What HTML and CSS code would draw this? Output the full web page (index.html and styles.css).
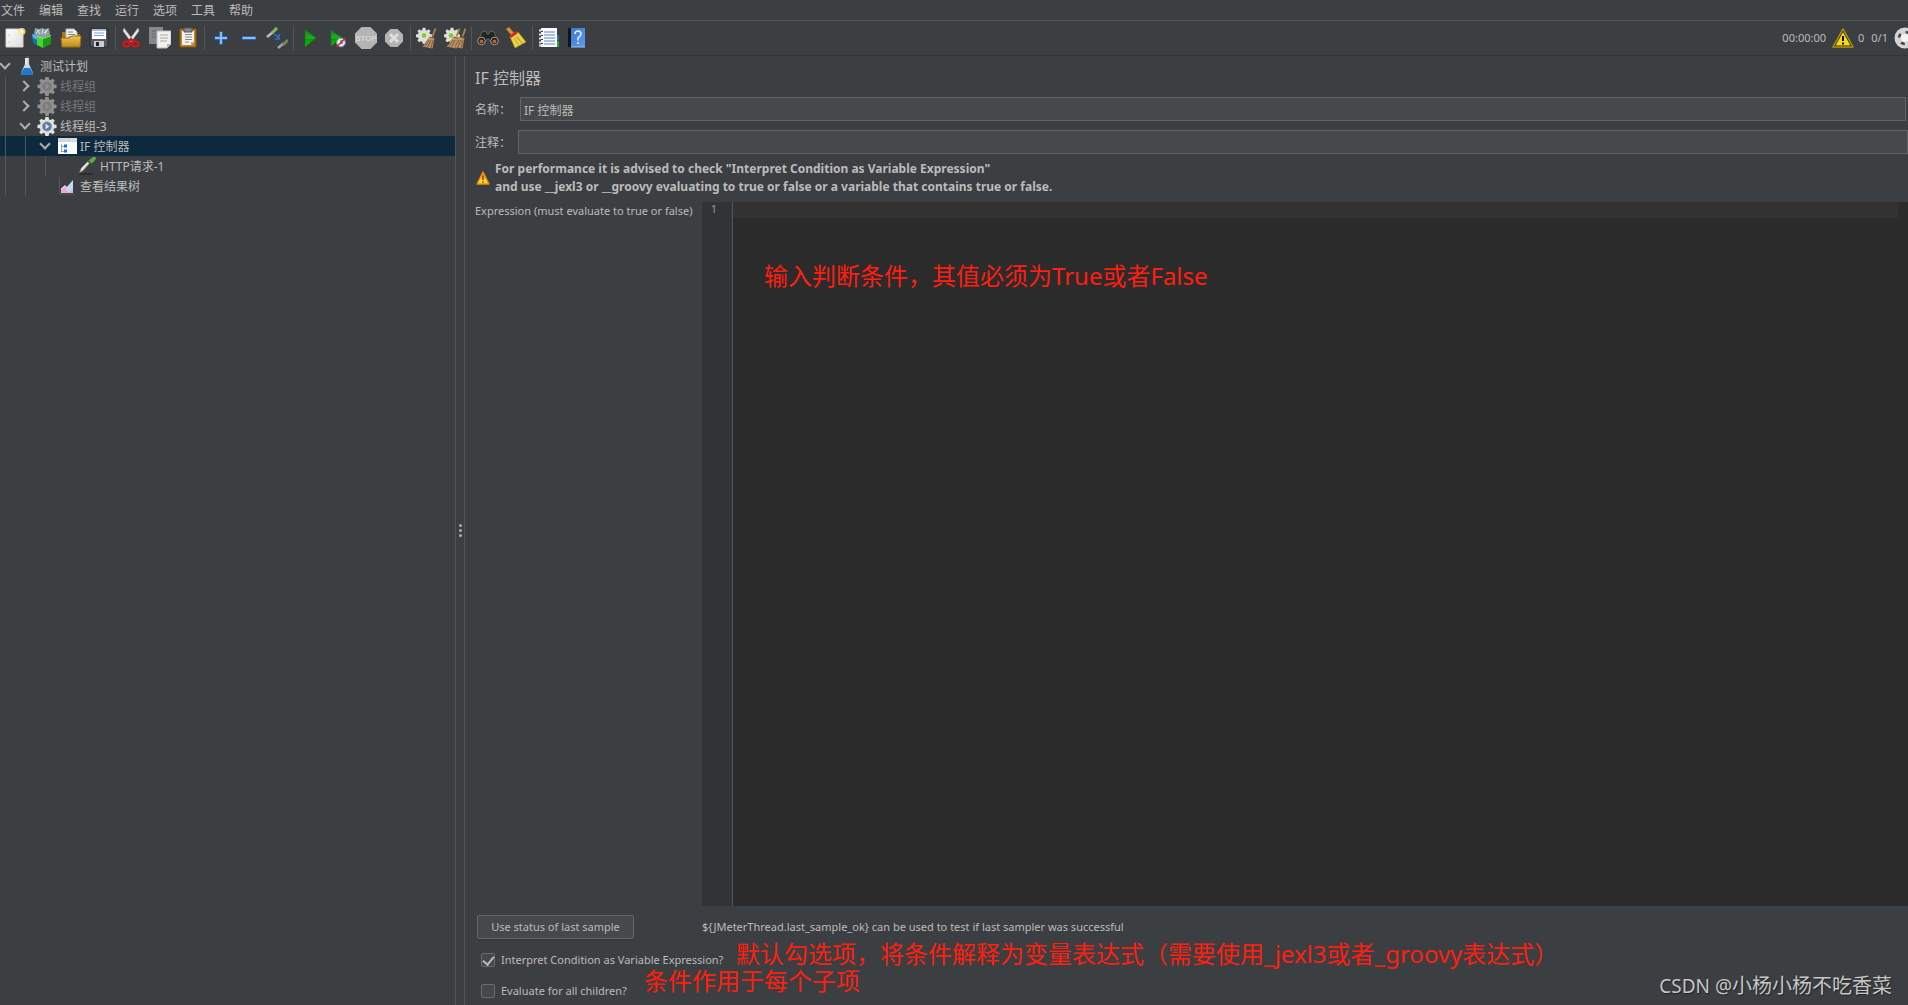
FILE: index.html
```html
<!DOCTYPE html>
<html lang="zh-CN">
<head>
<meta charset="utf-8">
<title>IF 控制器</title>
<link rel="stylesheet" href="styles.css">
</head>
<body>
<svg class="defs" aria-hidden="true">
  <defs>
    <linearGradient id="paper" x1="0" y1="0" x2="1" y2="1"><stop offset="0" stop-color="#fff"/><stop offset="1" stop-color="#dcdcdc"/></linearGradient>
    <linearGradient id="gold" x1="0" y1="0" x2="0" y2="1"><stop offset="0" stop-color="#f2c558"/><stop offset="1" stop-color="#c08a14"/></linearGradient>
    <linearGradient id="play" x1="0" y1="0" x2="0" y2="1"><stop offset="0" stop-color="#1c7a1c"/><stop offset=".5" stop-color="#22b022"/><stop offset=".55" stop-color="#0b980b"/><stop offset="1" stop-color="#0fc40f"/></linearGradient>
    <linearGradient id="book" x1="0" y1="0" x2="1" y2="1"><stop offset="0" stop-color="#3f78c8"/><stop offset="1" stop-color="#5b9bf0"/></linearGradient>
    <linearGradient id="warn" x1="0" y1="0" x2="0" y2="1"><stop offset="0" stop-color="#f08020"/><stop offset=".55" stop-color="#ffd21c"/><stop offset="1" stop-color="#ffe92e"/></linearGradient>
    <g id="gear">
      <path d="M8.3 1h3.4l.5 2.6 1.6.7L16 2.800 18.200 5l-1.500 2.200.7 1.600 2.600.5v3.400l-2.600.5-.7 1.600 1.500 2.200-2.200 2.200-2.200-1.500-1.600.7-.5 2.600H8.300l-.5-2.600-1.600-.7L4 19.200 1.800 17l1.500-2.200-.7-1.600L0 12.700V9.300l2.600-.5.7-1.600L1.800 5 4 2.800l2.200 1.500 1.600-.7z"/>
    </g>
    <g id="whisk">
      <path d="M21.500 1.500l-3 8" stroke="#a8804e" stroke-width="2"/>
      <path d="M15.500 9.500l5 1.500-1 5-1 5.500-10-2q3.500-2.500 4-6z" fill="#bd9468"/>
      <path d="M16 10l4.500 1.500M15 13l-4 6.500M17 13l-3.500 7.500M19 13l-2 8" stroke="#7d5a34" fill="none"/>
    </g>
  </defs>
</svg>

<div class="app">
  <nav class="menubar">
    <button>文件</button><button>编辑</button><button>查找</button><button>运行</button><button>选项</button><button>工具</button><button>帮助</button>
  </nav>

  <div class="toolbar">
    <button class="tool" aria-label="New"><svg viewBox="0 0 22 22"><path d="M2 2h17v18H2z" fill="url(#paper)" stroke="#d8d4cc"/><path d="M4.500 8h1M4.500 15h1" stroke="#999"/><circle cx="18" cy="4.500" r="3.500" fill="#f4e67c" opacity=".85"/><circle cx="18" cy="4.500" r="1.500" fill="#fffbd8"/></svg></button>
    <button class="tool" aria-label="Templates"><svg viewBox="0 0 22 22"><path d="M2 8l1-7 4 1 3-1 3 1 4-1 1 7-8 4z" fill="#8f9fa8"/><path d="M5 3l3 4M11 2l-1 5M15 3l-2 4M4 6l4-3M12 6l4-4" stroke="#d8e6ea" fill="none"/><path d="M0 7l6 2v10l-5-3z" fill="#1b6cae"/><path d="M0 7l6 2v4L1 11z" fill="#58b4e4"/><path d="M5 10l6 2v9l-6-3z" fill="#45d82c"/><path d="M11 11l8-3v9l-8 4z" fill="#1a9a16"/><path d="M5 9.500l6 2 8-3" stroke="#8cf26c" fill="none"/></svg></button>
    <button class="tool" aria-label="Open"><svg viewBox="0 0 22 22"><path d="M2 5h5l2 2h11v12H2z" fill="#a87614"/><path d="M6 2h8l3 3v10H6z" fill="#eee" stroke="#bbb"/><path d="M8 5h5M8 7.500h7M8 10h7" stroke="#888"/><path d="M1 11h8l3-2h9l-1 11H2z" fill="url(#gold)" stroke="#9a6e10"/></svg></button>
    <button class="tool" aria-label="Save"><svg viewBox="0 0 22 22"><path d="M2 2h18v18H4l-2-2z" fill="#55585e" stroke="#26282c"/><path d="M4 2h14v10H4z" fill="#fff"/><path d="M4 2h14v2H4z" fill="#a6bcdc"/><path d="M6 6h10M6 8.500h10" stroke="#7aa2d6"/><path d="M6 14h10v6H6z" fill="#c9ccd0"/><path d="M8 15h3v4H8z" fill="#222"/></svg></button>
    <span class="sep"></span>
    <button class="tool" aria-label="Cut"><svg viewBox="0 0 22 22"><path d="M3 1l9 12-2 2L2 4zM17 1L8 13l2 2 8-11z" fill="#e6e6e6" stroke="#9a9a9a" stroke-width=".5"/><ellipse cx="5.500" cy="17" rx="3.200" ry="2.600" fill="none" stroke="#d81414" stroke-width="2"/><ellipse cx="14.500" cy="17" rx="3.200" ry="2.600" fill="none" stroke="#d81414" stroke-width="2"/><path d="M6.500 15l3.500-3 3.500 3" stroke="#d81414" stroke-width="2" fill="none"/></svg></button>
    <button class="tool" aria-label="Copy"><svg viewBox="0 0 22 22"><path d="M0 0h14v17H0z" fill="#85888a"/><path d="M3 4h8M3 7h8M3 10h5" stroke="#65686a"/><path d="M8 4h14v13l-4 4H8z" fill="#f0f0f0" stroke="#bdbdbd"/><path d="M11 8h8M11 11h8M11 14h7" stroke="#aaa"/><path d="M18 21v-4h4z" fill="#b5b5b5"/></svg></button>
    <button class="tool" aria-label="Paste"><svg viewBox="0 0 22 22"><path d="M3 2h16v18H3z" fill="#c98220" stroke="#85510c"/><path d="M5 4h12v11l-3 3H5z" fill="#f3f3f3"/><path d="M7 1h8v4H7z" fill="#85888c" stroke="#4e5154"/><path d="M8 7.500h7M8 10h7M8 12.500h7M8 15h4" stroke="#888"/><path d="M14 18v-3h3z" fill="#aaa"/></svg></button>
    <span class="sep"></span>
    <button class="tool" aria-label="Expand"><svg viewBox="0 0 22 22"><path d="M11 4.500v13M4.500 11h13" stroke="#2c64b0" stroke-width="4"/><path d="M11 5v12M5 11h12" stroke="#8dbcf4" stroke-width="2"/></svg></button>
    <button class="tool" aria-label="Collapse"><svg viewBox="0 0 22 22"><path d="M4 11h14" stroke="#2c64b0" stroke-width="4"/><path d="M4.500 11h13" stroke="#8dbcf4" stroke-width="2"/></svg></button>
    <button class="tool" aria-label="Toggle"><svg viewBox="0 0 22 22" fill="none"><path d="M1 10l6-5" stroke="#b9bcb8" stroke-width="2.500"/><path d="M6 6l5-5" stroke="#82b862" stroke-width="3"/><path d="M12 21l6-5" stroke="#a2a5a1" stroke-width="2.500"/><path d="M17 18l5-5" stroke="#6b8a5c" stroke-width="3"/><path d="M8 7l5 4M13 7v5H9" stroke="#2a6fdc" stroke-width="1.500"/></svg></button>
    <span class="sep"></span>
    <button class="tool" aria-label="Start"><svg viewBox="0 0 22 22"><path d="M6 2.500l11 8.500-11 9z" fill="url(#play)" stroke="#0e7a0e" stroke-width=".6"/></svg></button>
    <button class="tool" aria-label="Start no pauses"><svg viewBox="0 0 22 22"><path d="M4 3l11 8-11 8z" fill="url(#play)" stroke="#0e7a0e" stroke-width=".6"/><circle cx="14" cy="15.500" r="4.300" fill="#dfe9f4" stroke="#6e9ccc"/><path d="M14 13v3h2" stroke="#446" fill="none"/><path d="M9.500 20l9-9" stroke="#e02020" stroke-width="1.500"/></svg></button>
    <button class="tool" aria-label="Stop"><svg viewBox="0 0 22 22"><path d="M6.500 0h9L22 6.500v9L15.500 22h-9L0 15.500v-9z" fill="#b4b4b4"/><text class="stop" x="11" y="14" text-anchor="middle">STOP</text></svg></button>
    <button class="tool" aria-label="Shutdown"><svg viewBox="0 0 22 22"><path d="M7.500 2h7L20 7.500v7L14.500 20h-7L2 14.500v-7z" fill="#b4b4b4"/><path d="M7 7l8 8M15 7l-8 8" stroke="#dedede" stroke-width="3"/></svg></button>
    <span class="sep"></span>
    <button class="tool" aria-label="Clear"><svg viewBox="0 0 22 22" fill="none"><g transform="scale(.8)" fill="#dcdfdc"><use href="#gear"/></g><circle cx="8" cy="8.500" r="3" fill="#8cc63c" stroke="#e8f0d8"/><use href="#whisk" transform="translate(-2)"/></svg></button>
    <button class="tool" aria-label="Clear all"><svg viewBox="0 0 22 22" fill="none"><g transform="scale(.8)" fill="#dcdfdc"><use href="#gear"/></g><circle cx="7" cy="8.500" r="3" fill="#8cc63c" stroke="#e8f0d8"/><use href="#whisk" transform="translate(-6)"/><use href="#whisk"/></svg></button>
    <span class="sep"></span>
    <button class="tool" aria-label="Search"><svg viewBox="0 0 22 22"><path d="M5 5l4-1 1 3h2l1-3 4 1 4 9-6 3-3-5h-2l-3 5-6-3z" fill="#242424" stroke="#77726c" stroke-width=".7"/><circle cx="4.500" cy="14" r="3.800" fill="#201c1a" stroke="#a4a09c"/><circle cx="17.500" cy="14" r="3.800" fill="#201c1a" stroke="#a4a09c"/><circle cx="4.500" cy="14.500" r="2" fill="#b4652c"/><circle cx="17.500" cy="14.500" r="2" fill="#b4652c"/></svg></button>
    <button class="tool" aria-label="Reset search"><svg viewBox="0 0 22 22"><path d="M1 2l3-2 6 7-3 2z" fill="#d2933a" stroke="#8a5a1a" stroke-width=".6"/><path d="M5 10l8-5 8 10-11 6z" fill="#ead34a" stroke="#a98c18" stroke-width=".6"/><path d="M4 9l7-5 2 2-7 5z" fill="#d42a20"/><path d="M9 11l5 8M12 9l5 8M10 10l8 6" stroke="#c8aa28" fill="none"/></svg></button>
    <span class="sep"></span>
    <button class="tool" aria-label="Function helper"><svg viewBox="0 0 22 22"><path d="M19 8h2v5h-2z" fill="#2a66c8"/><path d="M19 14h2v6h-2z" fill="#2fa82c"/><path d="M3 1h16v19H3z" fill="#fcfcfc"/><path d="M6 5h11M6 8h11M6 11h11M6 14h11M6 17h11" stroke="#5086c8"/><path d="M1 3.500h4M1 7.500h4M1 11.500h4M1 15.500h4M1 18.500h4" stroke="#e4e4e4" stroke-width="2"/><path d="M3 4.500h2M3 8.500h2M3 12.500h2M3 16.500h2" stroke="#444"/></svg></button>
    <button class="tool" aria-label="Help"><svg viewBox="0 0 22 22"><path d="M2 1h4v19H2z" fill="#10151c"/><path d="M5 1h14v19H5z" fill="url(#book)"/><path d="M5 20h14" stroke="#9cc4fa"/><path d="M9 7q0-3 3-3t3 3q0 2-3 4v2.500M12 15v2" fill="none" stroke="#e2edfc" stroke-width="1.600"/></svg></button>

    <div class="status">
      <span class="clock">00:00:00</span>
      <svg class="alert" viewBox="0 0 22 22"><path d="M11 2L1 20h20z" fill="#1c1a08" stroke="#b49a08" stroke-width="1.500" stroke-linejoin="round"/><path d="M11 5L3.500 18.500h15z" fill="#f9d71a"/><path d="M11 9v5M11 15.500v2" stroke="#111" stroke-width="2"/></svg>
      <span class="errors">0</span>
      <span class="threads">0/1</span>
      <svg class="ball" viewBox="0 0 22 22"><circle cx="11" cy="11" r="10.500" fill="#d6d6d6"/><circle cx="11" cy="11" r="6" fill="none" stroke="#444" stroke-width="2.500" stroke-dasharray="4 5.400"/><circle cx="11" cy="11" r="4" fill="#f4f4f4"/></svg>
    </div>
  </div>

  <div class="body">
    <aside class="tree">
      <div class="row"><span class="chev open"></span><svg class="icon" viewBox="0 0 20 20"><path d="M8 2h4v6l4 9q0 2-2 2H6q-2 0-2-2l4-9z" fill="#cfd8e2"/><path d="M7 12h6l3 5q0 2-2 2H6q-2 0-2-2z" fill="#1e78d2"/><path d="M9 2v6" stroke="#fff"/><path d="M9 0h3v2H9z" fill="#555"/></svg><span class="name">测试计划</span></div>
      <div class="row off"><span class="guide"></span><span class="chev"></span><svg class="icon" viewBox="0 0 20 21" fill="#909090"><use href="#gear"/><circle cx="10" cy="11" r="5" fill="#7c7c7c"/><path d="M8.500 8v6l4-3z" fill="#939393"/></svg><span class="name">线程组</span></div>
      <div class="row off"><span class="guide"></span><span class="chev"></span><svg class="icon" viewBox="0 0 20 21" fill="#909090"><use href="#gear"/><circle cx="10" cy="11" r="5" fill="#7c7c7c"/><path d="M8.500 8v6l4-3z" fill="#939393"/></svg><span class="name">线程组</span></div>
      <div class="row"><span class="guide"></span><span class="chev open"></span><svg class="icon" viewBox="0 0 20 21" fill="#e2e2de"><use href="#gear"/><circle cx="10" cy="11" r="5" fill="#5878a4" stroke="#9cacc4"/><path d="M8.500 8v6l4-3z" fill="#dce8fa"/></svg><span class="name">线程组-3</span></div>
      <div class="row selected"><span class="guide"></span><span class="guide"></span><span class="chev open"></span><svg class="icon" viewBox="0 0 20 20"><path d="M1 2h19v16H1z" fill="#fafafa"/><path d="M1 2h19v4H1z" fill="#d5d5d5"/><path d="M14 4h1M16 4h1M18 4h1" stroke="#fff"/><path d="M4.500 8v8M4 10.500h3M4 15.500h3" stroke="#8aa" fill="none"/><path d="M7 8.500h3v3H7zM7 13.500h3v3H7z" fill="#1c6cd8"/></svg><span class="name">IF 控制器</span></div>
      <div class="row"><span class="guide"></span><span class="guide"></span><span class="guide"></span><span class="chev none"></span><svg class="icon" viewBox="0 0 20 20"><path d="M2 18h14" stroke="#2c2e30" stroke-width="2"/><path d="M2 17l2-5 8-8 2 2-8 9z" fill="#c9ccca" stroke="#555" stroke-width=".7"/><path d="M4 14l8-8" stroke="#fff"/><path d="M11 5l5-4q2-1 3 1 0 2-5 6z" fill="#63a548"/><path d="M10 4l5 5" stroke="#2e5a20" stroke-width="1.500"/></svg><span class="name">HTTP请求-1</span></div>
      <div class="row"><span class="guide"></span><span class="guide"></span><span class="chev none"></span><svg class="icon" viewBox="0 0 20 20"><path d="M2.500 1v17H18" stroke="#55585a" fill="none"/><path d="M4 17v-4l4-4 3 3 5 0v5z" fill="#f0a8dc"/><path d="M9 12l7-8v10l-5 2z" fill="#bcdcf6"/><path d="M4 13l4-3 3 3" stroke="#fbe0f4" fill="none"/></svg><span class="name">查看结果树</span></div>
    </aside>

    <div class="splitter"><i></i><i></i><i></i></div>

    <main class="panel">
      <h1>IF 控制器</h1>
      <div class="field"><label for="name">名称：</label><input id="name" type="text" value="IF 控制器"></div>
      <div class="field wide"><label for="comment">注释：</label><input id="comment" type="text"></div>
      <div class="advice">
        <svg viewBox="0 0 14 14"><path d="M7 1L1 13h12z" fill="url(#warn)" stroke="#e88a14" stroke-width="1.400" stroke-linejoin="round"/><path d="M7 4.500v4.500M7 10.200v1.600" stroke="#a83410" stroke-width="1.600"/></svg>
        <strong>For performance it is advised to check "Interpret Condition as Variable Expression"<br>and use __jexl3 or __groovy evaluating to true or false or a variable that contains true or false.</strong>
      </div>
      <div class="expr">
        <label for="code">Expression (must evaluate to true or false)</label>
        <div class="editor">
          <span class="gutter">1</span>
          <textarea id="code" spellcheck="false"></textarea>
          <p class="note note-expr">输入判断条件，其值必须为True或者False</p>
        </div>
      </div>
      <div class="actions"><button class="use">Use status of last sample</button><span>${JMeterThread.last_sample_ok} can be used to test if last sampler was successful</span></div>
      <div class="check"><input id="interp" type="checkbox" checked><label for="interp">Interpret Condition as Variable Expression?</label>
        <p class="note note-interp">默认勾选项，将条件解释为变量表达式（需要使用_jexl3或者_groovy表达式）</p></div>
      <div class="check"><input id="each" type="checkbox"><label for="each">Evaluate for all children?</label>
        <p class="note note-each">条件作用于每个子项</p></div>
    </main>
  </div>
  <p class="watermark"><span>CSDN @</span>小杨小杨不吃香菜</p>
</div>
</body>
</html>
```
FILE: styles.css
```css
* { box-sizing: border-box; }
body {
  margin: 0;
  background: #3c3f41;
  color: #bbb;
  font: 12px/16px "Noto Sans", "Noto Sans CJK SC", sans-serif;
}
h1, p { margin: 0; font-weight: normal; }
button, input, textarea { font: inherit; color: inherit; margin: 0; }
svg { display: block; }
.defs { position: absolute; width: 0; height: 0; }
.app { position: relative; display: flex; flex-direction: column; height: 100vh; overflow: hidden; }

.menubar { display: flex; gap: 14px; height: 21px; padding: 2px 1px 0; border-bottom: 1px solid #555; }
.menubar button { padding: 0; border: 0; background: none; }

.toolbar { display: flex; align-items: center; height: 35px; padding-left: 1px; border-bottom: 1px solid #323537; }
.tool { flex: none; width: 28px; height: 28px; padding: 3px; border: 0; background: none; }
.tool svg { width: 22px; height: 22px; }
.stop { fill: #d6d6d6; font: bold 8px "Liberation Sans", sans-serif; }
.sep { flex: none; width: 5px; height: 24px; background: linear-gradient(#555, #555) 2px 0 / 1px 100% no-repeat; }
.status { display: flex; align-items: center; margin-left: auto; margin-right: -8px; font-size: 11px; }
.alert { width: 22px; height: 22px; margin: 0 4px 0 6px; }
.threads { margin: 0 6px 0 7px; }
.ball { width: 22px; height: 22px; }

.body { flex: 1; display: flex; min-height: 0; }
.tree { flex: 0 0 455px; }
.row { display: flex; align-items: center; height: 20px; }
.row.selected { background: #0d293e; }
.row.off { color: #777; }
.guide { width: 20px; height: 20px; background: linear-gradient(#55585a, #55585a) 5px 0 / 1px 100% no-repeat; }
.chev { display: flex; align-items: center; justify-content: center; width: 10px; height: 12px; margin-right: 7px; padding-right: 2px; }
.chev::before { content: ""; width: 6px; height: 6px; border: solid #adadad; border-width: 2px 2px 0 0; transform: rotate(45deg); }
.chev.open { padding: 0 0 4px; }
.chev.open::before { transform: rotate(135deg); }
.chev.none::before { display: none; }
.icon { width: 20px; height: 20px; margin-right: 3px; }
.name { padding-top: 2px; }

.splitter { flex: 0 0 10px; display: flex; flex-direction: column; align-items: center; justify-content: center; gap: 2px; border: solid #555; border-width: 0 1px; }
.splitter i { width: 3px; height: 3px; border-radius: 50%; background: #adadad; }

.panel { flex: 1; min-width: 0; display: flex; flex-direction: column; }
h1 { padding: 10px 10px 7px; font-size: 16px; line-height: 24px; }
.field { display: flex; align-items: center; height: 24px; margin-bottom: 9px; padding: 0 2px 0 10px; }
.field label { width: 45px; padding-top: 2px; }
.field input { flex: 1; height: 24px; padding: 1px 3px 0; border: 1px solid #646464; background: #45494a; outline: 0; }
.field.wide { padding-right: 0; margin-bottom: 6px; }
.field.wide label { width: 43px; }
.advice { display: flex; align-items: center; gap: 5px; padding: 0 11px; margin-bottom: 6px; line-height: 18px; }
.advice svg { width: 14px; height: 14px; }

.expr { flex: 1; display: flex; min-height: 0; }
.expr > label { flex: 0 0 237px; padding: 1px 0 0 10px; font-size: 11px; }
.editor { position: relative; flex: 1; display: flex; background: #2b2b2b; }
.gutter { width: 31px; padding-right: 15px; border-right: 1px solid #555; background: #313335; color: #999; font: 11px/14px "Noto Sans", sans-serif; text-align: right; }
.editor textarea { flex: 1; padding: 0; border: 0; outline: 0; resize: none; background: linear-gradient(#323232, #323232) 0 0 / calc(100% - 10px) 16px no-repeat; }

.actions { display: flex; align-items: center; height: 42px; padding-left: 12px; font-size: 11px; }
.use { width: 157px; height: 24px; margin-right: 68px; padding: 0; border: 1px solid #646769; border-radius: 2px; background: #45494a; box-shadow: 0 1px 0 #323537; }
.check { position: relative; display: flex; align-items: center; height: 24px; margin-bottom: 7px; padding-left: 16px; font-size: 11px; }
.check:last-child { margin-bottom: 2px; }
.check input { appearance: none; display: flex; align-items: center; justify-content: center; width: 14px; height: 14px; margin-right: 6px; padding-bottom: 2px; border: 1px solid #6b6b6b; border-radius: 2px; background: #43494a; }
.check input:checked::before { content: ""; width: 5px; height: 9px; border: solid #bbb; border-width: 0 2px 2px 0; transform: rotate(40deg); }

.note { position: absolute; color: #ff1e10; font-size: 24px; line-height: 24px; white-space: nowrap; }
.note-expr { left: 62px; top: 62px; }
.note-interp { left: 271px; top: -6px; }
.note-each { left: 179px; top: -10px; }
.watermark { position: absolute; right: 16px; bottom: 5px; color: #c4c6c8; font-size: 20px; line-height: 28px; text-shadow: 1px 1px 1px #222; }
.watermark span { font-size: 19px; }
```
